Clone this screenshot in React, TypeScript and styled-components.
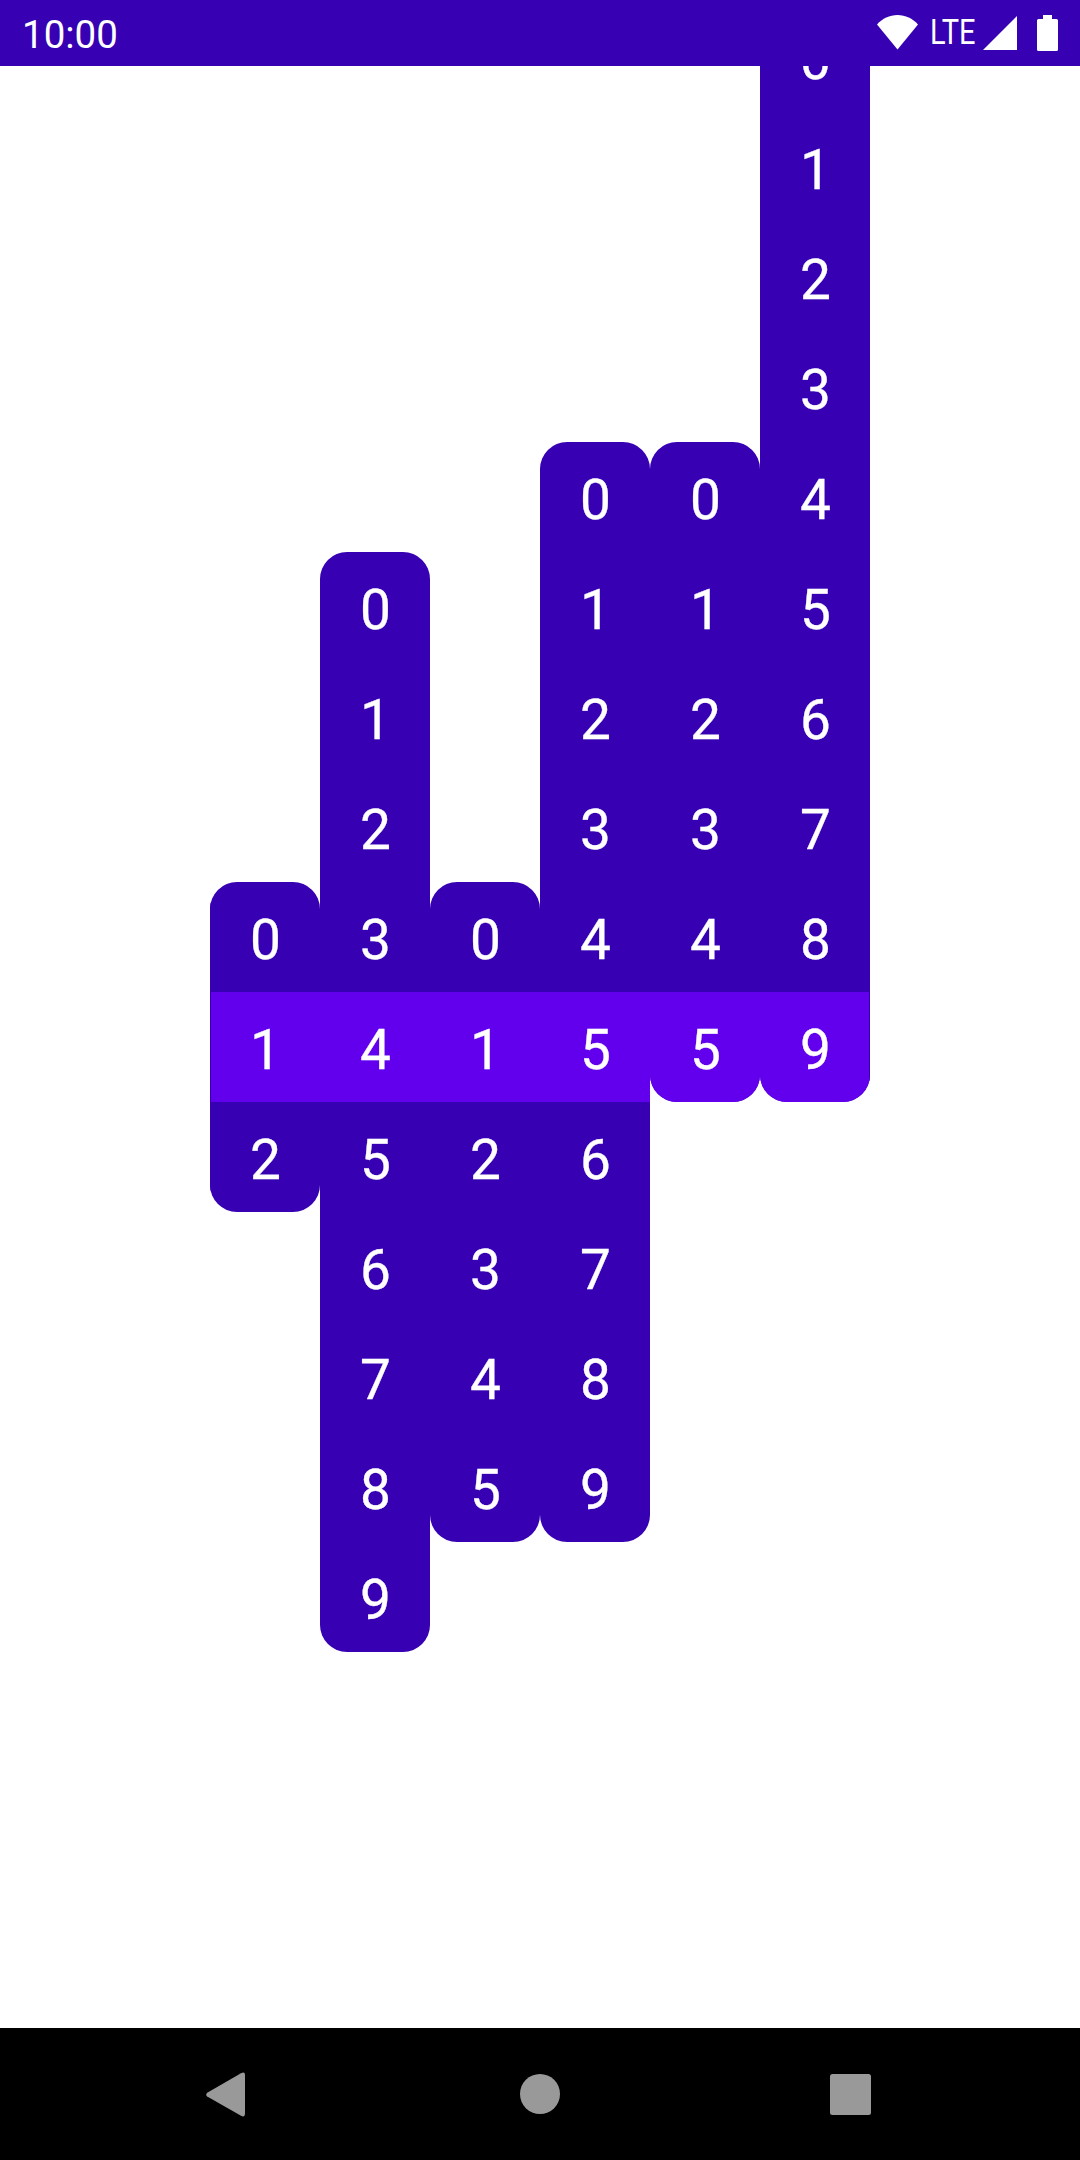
import React from "react";
import styled, { createGlobalStyle } from "styled-components";

const CELL = 110;
const SELECTED_TOP = 926;

const GlobalStyle = createGlobalStyle`
  body {
    margin: 0;
    background: #fff;
  }
`;

const Screen = styled.div`
  display: flex;
  flex-direction: column;
  width: 1080px;
  height: 2160px;
  overflow: hidden;
  background: #fff;
  color: #fff;
  font-family: Roboto, sans-serif;
`;

const StatusBar = styled.header`
  display: flex;
  flex: none;
  box-sizing: border-box;
  height: 66px;
  padding: 0 22px 0 22px;
  align-items: flex-start;
  justify-content: space-between;
  background: #3700b3;
`;

const Time = styled.time`
  padding-top: 12px;
  font-size: 38.5px;
  line-height: 45px;
`;

const StatusIcons = styled.div`
  display: flex;
  align-items: flex-start;
  padding-top: 15px;
`;

const NetworkType = styled.span`
  width: 46px;
  margin: 0 7px 0 12px;
  font-size: 34.5px;
  line-height: 35px;
  white-space: nowrap;
  transform: scaleX(0.84);
  transform-origin: 0 50%;
`;

const StatusGlyph = styled.svg`
  display: block;
  fill: #fff;
`;

const BatteryGlyph = styled(StatusGlyph)`
  margin-left: 20px;
`;

const Clock = styled.main`
  display: flex;
  flex: none;
  height: 1962px;
  align-items: flex-start;
  justify-content: center;
  overflow: hidden;
`;

const Digit = styled.div<{ $active: boolean }>`
  box-sizing: border-box;
  height: ${CELL}px;
  padding: 26px 0 0 1px;
  background: ${({ $active }) => ($active ? "#6200ee" : "transparent")};
  font-size: 55px;
  line-height: 64px;
  text-align: center;
  -webkit-text-stroke: 0.3px #fff;
`;

const Column = styled.div<{ $selected: number }>`
  flex: none;
  width: ${CELL}px;
  margin-top: ${({ $selected }) => SELECTED_TOP - $selected * CELL}px;
  border-radius: 27px;
  overflow: hidden;
  background: #3700b3;

  &:first-child ${Digit} {
    box-shadow: inset 1px 0 #3700b3;
  }

  &:last-child ${Digit} {
    box-shadow: inset -1px 0 #3700b3;
  }
`;

const NavBar = styled.nav`
  display: flex;
  flex: none;
  box-sizing: border-box;
  height: 132px;
  padding: 44px 208px 0 205px;
  background: #000;
  justify-content: space-between;
`;

const NavGlyph = styled.svg`
  display: block;
  fill: #999;
`;

const columns = [
  { count: 3, selected: 1 },
  { count: 10, selected: 4 },
  { count: 6, selected: 1 },
  { count: 10, selected: 5 },
  { count: 6, selected: 5 },
  { count: 10, selected: 9 },
];

export default function App() {
  return (
    <>
      <GlobalStyle />
      <Screen>
        <StatusBar>
          <Time>10:00</Time>
          <StatusIcons>
            <StatusGlyph width="41" height="35" viewBox="0 0 41 35">
              <path d="M20.5 34.5 0 9.5C5.500 3.500 12.500 0 20.500 0S35.500 3.500 41 9.500Z" />
            </StatusGlyph>
            <NetworkType>LTE</NetworkType>
            <StatusGlyph width="34" height="35" viewBox="0 0 34 35">
              <path d="M0 35 34 1V35Z" />
            </StatusGlyph>
            <BatteryGlyph width="21" height="36" viewBox="0 0 21 36">
              <path d="M6 0H15V4H19.500Q21 4 21 5.500V34.500Q21 36 19.500 36H1.500Q0 36 0 34.500V5.500Q0 4 1.500 4H6Z" />
            </BatteryGlyph>
          </StatusIcons>
        </StatusBar>
        <Clock>
          {columns.map(({ count, selected }, index) => (
            <Column key={index} $selected={selected}>
              {Array.from({ length: count }, (_, digit) => (
                <Digit key={digit} $active={digit === selected}>
                  {digit}
                </Digit>
              ))}
            </Column>
          ))}
        </Clock>
        <NavBar>
          <NavGlyph width="41" height="46" viewBox="0 0 41 46">
            <path d="M2.200 20.800 36 1.200Q40 -.8 40 3V41Q40 45.800 36 43.800L2.200 24.500Q.2 22.600 2.200 20.800Z" />
          </NavGlyph>
          <NavGlyph width="44" height="46" viewBox="0 0 44 46">
            <circle cx="24" cy="22" r="20" />
          </NavGlyph>
          <NavGlyph width="42" height="46" viewBox="0 0 42 46">
            <rect y="2" width="41" height="41" rx="2.500" />
          </NavGlyph>
        </NavBar>
      </Screen>
    </>
  );
}
